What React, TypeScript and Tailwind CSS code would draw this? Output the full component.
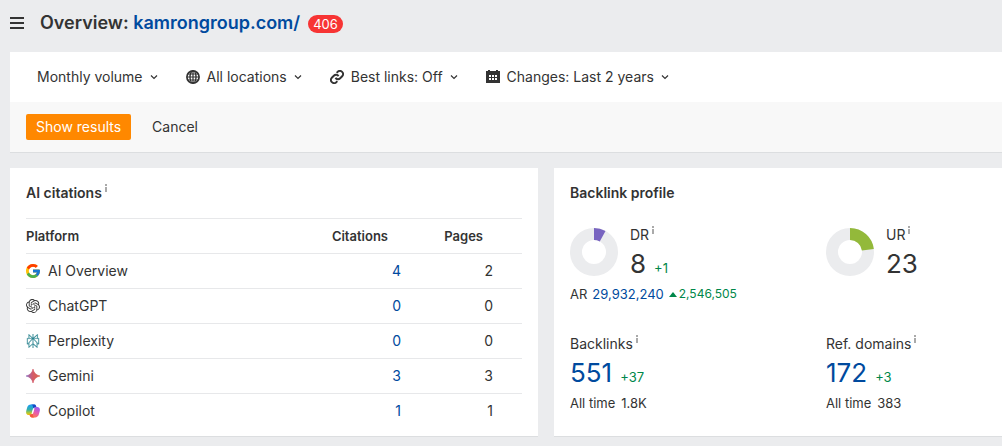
import type { ReactNode } from 'react';
import { FcGoogle } from 'react-icons/fc';
import { SiOpenai, SiPerplexity } from 'react-icons/si';

const PLATFORMS: { name: string; icon: ReactNode; citations: number; pages: number }[] = [
  { name: 'AI Overview', icon: <GoogleIcon />, citations: 4, pages: 2 },
  { name: 'ChatGPT', icon: <SiOpenai size={14} />, citations: 0, pages: 0 },
  { name: 'Perplexity', icon: <PerplexityIcon />, citations: 0, pages: 0 },
  { name: 'Gemini', icon: <GeminiIcon />, citations: 3, pages: 3 },
  { name: 'Copilot', icon: <CopilotIcon />, citations: 1, pages: 1 },
];

const FILTERS: { label: string; icon?: ReactNode }[] = [
  { label: 'Monthly volume' },
  { label: 'All locations', icon: <GlobeIcon /> },
  { label: 'Best links: Off', icon: <LinkIcon /> },
  { label: 'Changes: Last 2 years', icon: <CalendarIcon /> },
];

function GoogleIcon() {
  return <FcGoogle size={14} viewBox="4 4 40 40" />;
}

function PerplexityIcon() {
  return <SiPerplexity size={14} color="#2b8591" stroke="#2b8591" strokeWidth={0.3} />;
}

function GeminiIcon() {
  return (
    <svg width="14" height="14" viewBox="0 0 14 14" aria-hidden="true">
      <defs>
        <linearGradient id="gemini" x1="0" y1="7" x2="14" y2="7" gradientUnits="userSpaceOnUse">
          <stop offset="0" stopColor="#8d6fc4" />
          <stop offset="0.5" stopColor="#d65a66" />
          <stop offset="1" stopColor="#d9684f" />
        </linearGradient>
      </defs>
      <path
        d="M7 0C7.8 3.8 10 6.1 14 7 10 7.9 7.8 10.2 7 14 6.2 10.2 4 7.9 0 7 4 6.1 6.2 3.8 7 0Z"
        fill="url(#gemini)"
        stroke="url(#gemini)"
        strokeWidth="0.6"
      />
    </svg>
  );
}

function CopilotIcon() {
  return (
    <svg width="14" height="14" viewBox="0 0 24 24" aria-hidden="true">
      <defs>
        <linearGradient id="copilotLeft" x1="6" y1="2" x2="6" y2="19" gradientUnits="userSpaceOnUse">
          <stop offset="0" stopColor="#1a9df0" />
          <stop offset="0.45" stopColor="#35b0a8" />
          <stop offset="0.75" stopColor="#a9c63c" />
          <stop offset="1" stopColor="#f6c400" />
        </linearGradient>
        <linearGradient id="copilotRight" x1="21" y1="6" x2="13" y2="23" gradientUnits="userSpaceOnUse">
          <stop offset="0" stopColor="#9b5cf0" />
          <stop offset="0.5" stopColor="#e65ab0" />
          <stop offset="1" stopColor="#ff7a4d" />
        </linearGradient>
      </defs>
      <path d="M18 6 17 3C16.5 1.7 15.5 1 14 1H8.5C5 1 3 3 2 6L.6 11C-.8 16 1 19 5 19H6.5C8.5 19 9.6 17.8 10.2 15.8L12.5 8C13 6.5 14 6 15.5 6Z" fill="url(#copilotLeft)" />
      <path d="M18 6 17 3C16.5 1.7 15.5 1 14 1H8C10.5 1 11.5 2.6 12 4.2L12.5 8C13 6.5 14 6 15.5 6Z" fill="#1647c4" />
      <path d="M6 18 7 21C7.5 22.3 8.5 23 10 23H15.5C19 23 21 21 22 18L23.4 13C24.8 8 23 5 19 5H17.5C15.5 5 14.4 6.2 13.8 8.2L11.5 16C11 17.5 10 18 8.5 18Z" fill="url(#copilotRight)" />
      <path d="M6 18 7 21C7.5 22.3 8.5 23 10 23H15C13 23 12.3 21.4 12 19.8L11.5 16C11 17.5 10 18 8.5 18Z" fill="#f4583e" />
      <path d="M14.5 7.5 12 16.5H9.5L12 7.5Z" fill="#fff" />
    </svg>
  );
}

function GlobeIcon() {
  return (
    <svg width="14" height="14" viewBox="0 0 14 14" fill="none" stroke="#333" strokeWidth="1.7" aria-hidden="true">
      <circle cx="7" cy="7" r="6.1" />
      <ellipse cx="7" cy="7" rx="3" ry="6.1" strokeWidth="1.4" />
      <path d="M7 1V13M1 7H13M1.8 4H12.2M1.8 10H12.2" strokeWidth="1.2" />
    </svg>
  );
}

function LinkIcon() {
  return (
    <svg width="14" height="14" viewBox="1 1 22 22" fill="none" stroke="#333" strokeWidth="3" aria-hidden="true">
      <path d="M9.5 13.5a5 5 0 0 0 7.5.5l3.5-3.5a5 5 0 0 0-7-7l-2 2" />
      <path d="M14.5 10.5a5 5 0 0 0-7.5-.5L3.5 13.5a5 5 0 0 0 7 7l2-2" />
    </svg>
  );
}

function CalendarIcon() {
  return (
    <svg width="14" height="14" viewBox="0 0 14 14" aria-hidden="true">
      <path d="M0 1H2V0H4V1H10V0H12V1H14V13H0Z" fill="#333" />
      <path d="M3 5H5V7H3ZM6 5H8V7H6ZM9 5H11V7H9ZM3 8H5V10H3ZM6 8H8V10H6ZM9 8H11V10H9Z" fill="#fff" />
    </svg>
  );
}

function Chevron() {
  return (
    <svg width="8" height="6" viewBox="0 0 8 6" fill="none" stroke="#333" strokeWidth="1.2" aria-hidden="true">
      <path d="M1 1.5 4 4.5 7 1.5" />
    </svg>
  );
}

/** Small superscript "i" that marks a label with a hint. */
function InfoMark() {
  return (
    <svg className="mt-px self-start" width="2" height="8" viewBox="0 0 2 8" shapeRendering="crispEdges" aria-hidden="true">
      <path d="M0 0H2V2H0ZM0 3H2V8H0Z" fill="#aaa" />
    </svg>
  );
}

function Donut({ value, color }: { value: number; color: string }) {
  return (
    <svg className="mt-[3px]" width="48" height="48" viewBox="0 0 48 48" fill="none" strokeWidth="12" aria-hidden="true">
      <circle cx="24" cy="24" r="18" stroke="#ebecee" />
      <circle cx="24" cy="24" r="18" stroke={color} pathLength={100} strokeDasharray={`${value} 100`} transform="rotate(-90 24 24)" />
    </svg>
  );
}

function Label({ children }: { children: ReactNode }) {
  return (
    <div className="flex items-center gap-[3px] leading-5">
      {children}
      <InfoMark />
    </div>
  );
}

function Rating({ label, value, change, color }: { label: string; value: number; change?: string; color: string }) {
  return (
    <div className="flex items-start gap-3">
      <Donut value={value} color={color} />
      <div>
        <Label>{label}</Label>
        <div className="flex items-baseline gap-2">
          <span className="text-[26px] leading-[38px]">{value}</span>
          {change && <span className="text-[13px] text-[#00874a]">{change}</span>}
        </div>
      </div>
    </div>
  );
}

function LinkStat({ label, value, change, allTime }: { label: string; value: string; change: string; allTime: string }) {
  return (
    <div>
      <Label>{label}</Label>
      <div className="flex items-baseline gap-2">
        <a href="#" className="text-[26px] leading-[38px] text-[#004a9e]">{value}</a>
        <span className="text-[13px] text-[#00874a]">{change}</span>
      </div>
      <div className="mt-px flex gap-[6px] text-[13px] leading-5">
        <span>All time</span>
        <span>{allTime}</span>
      </div>
    </div>
  );
}

function AiCitations() {
  return (
    <section className="border-b border-[#dcdee0] bg-white px-4 pb-[7px]">
      <h2 className="flex h-[50px] items-center gap-[3px] text-sm font-semibold">
        <span>AI citations</span>
        <span className="flex h-5"><InfoMark /></span>
      </h2>
      <table className="w-full border-collapse">
        <thead>
          <tr className="h-[35px] border-y border-[#e7e8ea] text-[13px]">
            <th className="text-left font-semibold">Platform</th>
            <th className="w-[110px] pr-[29px] text-right font-semibold">Citations</th>
            <th className="w-[105px] pr-[39px] text-right font-semibold">Pages</th>
          </tr>
        </thead>
        <tbody>
          {PLATFORMS.map(({ name, icon, citations, pages }) => (
            <tr key={name} className="h-[35px] border-b border-[#e7e8ea] last:border-b-0">
              <td>
                <div className="flex items-center gap-2">
                  {icon}
                  {name}
                </div>
              </td>
              <td className="pr-4 text-right">
                <a href="#" className="text-[#004a9e]">{citations}</a>
              </td>
              <td className="pr-[29px] text-right">{pages}</td>
            </tr>
          ))}
        </tbody>
      </table>
    </section>
  );
}

function BacklinkProfile() {
  return (
    <section className="border-b border-[#dcdee0] bg-white pl-4">
      <h2 className="flex h-[50px] items-center text-sm font-semibold">Backlink profile</h2>
      <div className="mt-[7px] grid grid-cols-[256px_1fr]">
        <div>
          <Rating label="DR" value={8} change="+1" color="#7864c0" />
          <div className="mt-px flex items-center gap-[5px] text-[13px] leading-5">
            <span>AR</span>
            <a href="#" className="text-[#004a9e]">29,932,240</a>
            <span className="flex items-center gap-[2px] text-xs text-[#00874a]">
              <svg width="8" height="5" viewBox="0 0 8 5" fill="currentColor" aria-hidden="true">
                <path d="M4 0 8 5H0Z" />
              </svg>
              2,546,505
            </span>
          </div>
        </div>
        <Rating label="UR" value={23} color="#93b93a" />
      </div>
      <div className="mt-[30px] grid grid-cols-[256px_1fr]">
        <LinkStat label="Backlinks" value="551" change="+37" allTime="1.8K" />
        <LinkStat label="Ref. domains" value="172" change="+3" allTime="383" />
      </div>
    </section>
  );
}

export default function App() {
  return (
    <div className="min-h-screen bg-[#ebecee] pb-[9px] pl-[10px] font-['Inter',sans-serif] text-sm text-[#333]">
      <header className="flex h-[52px] items-center pb-[6px]">
        <button type="button" aria-label="Menu">
          <svg width="14" height="12" viewBox="0 0 14 12" shapeRendering="crispEdges" aria-hidden="true">
            <path d="M0 0H14V2H0ZM0 5H14V7H0ZM0 10H14V12H0Z" fill="#333" />
          </svg>
        </button>
        <h1 className="ml-4 text-lg font-semibold">
          Overview: <a href="#" className="text-[#004a9e]">kamrongroup.com/</a>
        </h1>
        <span className="ml-2 mt-px rounded-full bg-[#f73434] px-[5px] text-[13px] leading-[18px] text-white">406</span>
      </header>

      <section className="border-b border-[#dcdee0] bg-white">
        <div className="flex h-[50px] items-center gap-7 pl-[27px]">
          {FILTERS.map(({ label, icon }) => (
            <button key={label} type="button" className="flex items-center gap-[7px]">
              {icon}
              {label}
              <Chevron />
            </button>
          ))}
        </div>
        <div className="flex h-[50px] items-center gap-[21px] bg-[#f8f8f8] pl-4">
          <button type="button" className="h-[26px] rounded-[2px] bg-[#ff8800] px-[10px] text-white">Show results</button>
          <button type="button">Cancel</button>
        </div>
      </section>

      <main className="mt-[15px] grid grid-cols-[33fr_28fr] gap-4">
        <AiCitations />
        <BacklinkProfile />
      </main>
    </div>
  );
}
